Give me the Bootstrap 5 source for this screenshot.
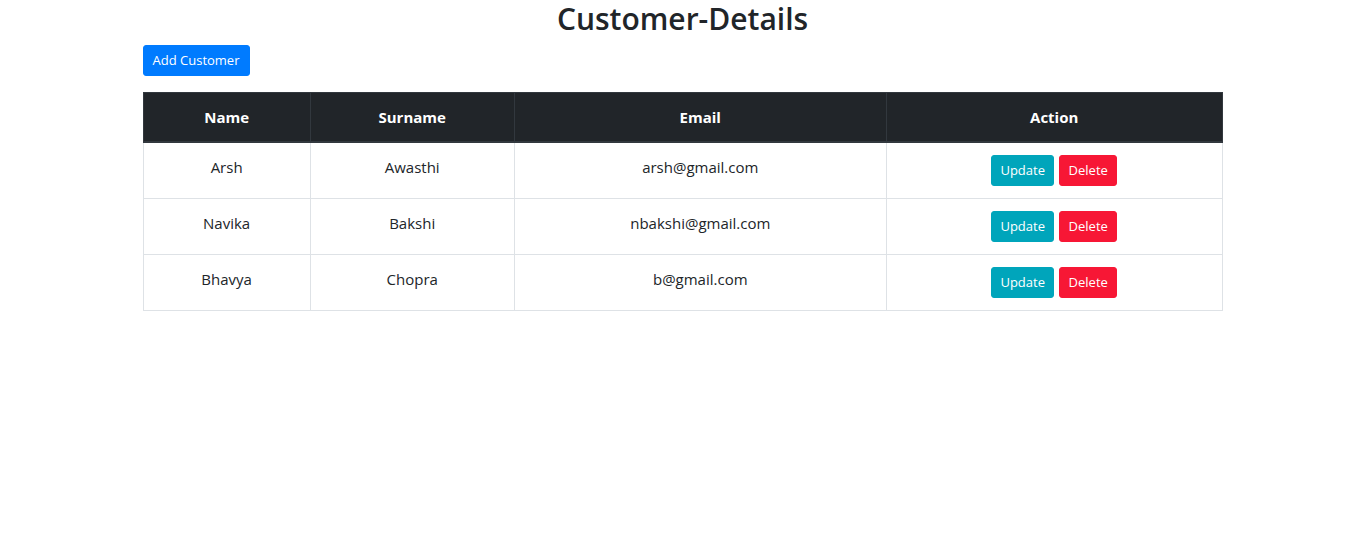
<!DOCTYPE html>
<html lang="en">
<head>
<meta charset="utf-8">
<meta name="viewport" content="width=device-width, initial-scale=1">
<title>Customer-Details</title>
<link href="https://cdn.jsdelivr.net/npm/bootstrap@5.3.0/dist/css/bootstrap.min.css" rel="stylesheet">
<style>
  body { font-family: "Segoe UI", "Open Sans", "Noto Sans", sans-serif; font-size: 15px; line-height: 24px; color: #212529; }
  .page { max-width: 1112px; }
  h1 { font-size: 30px; line-height: 37px; font-weight: 600; }
  .btn-sm { --bs-btn-font-size: 13px; --bs-btn-border-radius: 3px; --bs-btn-color: #fff; --bs-btn-hover-color: #fff; line-height: 21px; padding-inline: 0; }
  .btn-add { --bs-btn-bg: #007bff; --bs-btn-border-color: #007bff; --bs-btn-hover-bg: #0069d9; width: 107px; }
  .btn-update { --bs-btn-bg: #00a5bb; --bs-btn-border-color: #00a5bb; --bs-btn-hover-bg: #138496; width: 63px; }
  .btn-delete { --bs-btn-bg: #f71735; --bs-btn-border-color: #f71735; --bs-btn-hover-bg: #c82333; width: 58px; }
  .customers { table-layout: fixed; --bs-table-border-color: #dee2e6; }
  .customers > :not(caption) > * > * { padding: 12px; border-width: 1px; }
  .customers > thead > tr > th { background: #212529; color: #fff; border-color: #32383e; border-bottom-width: 2px; }
  .col-name { width: 15.5%; }
  .col-surname { width: 18.9%; }
  .col-email { width: 34.5%; }
  .actions { gap: 5px; }
</style>
</head>
<body>
<main class="container page px-3">
  <h1 class="text-center mb-2">Customer-Details</h1>
  <button type="button" class="btn btn-sm btn-add mb-3">Add Customer</button>
  <table class="table customers text-center mb-0">
    <colgroup><col class="col-name"><col class="col-surname"><col class="col-email"><col></colgroup>
    <thead>
      <tr><th scope="col">Name</th><th scope="col">Surname</th><th scope="col">Email</th><th scope="col">Action</th></tr>
    </thead>
    <tbody>
      <tr>
        <td>Arsh</td><td>Awasthi</td><td>arsh@gmail.com</td>
        <td><div class="d-flex justify-content-center actions"><button type="button" class="btn btn-sm btn-update">Update</button><button type="button" class="btn btn-sm btn-delete">Delete</button></div></td>
      </tr>
      <tr>
        <td>Navika</td><td>Bakshi</td><td>nbakshi@gmail.com</td>
        <td><div class="d-flex justify-content-center actions"><button type="button" class="btn btn-sm btn-update">Update</button><button type="button" class="btn btn-sm btn-delete">Delete</button></div></td>
      </tr>
      <tr>
        <td>Bhavya</td><td>Chopra</td><td>b@gmail.com</td>
        <td><div class="d-flex justify-content-center actions"><button type="button" class="btn btn-sm btn-update">Update</button><button type="button" class="btn btn-sm btn-delete">Delete</button></div></td>
      </tr>
    </tbody>
  </table>
</main>
<script src="https://cdn.jsdelivr.net/npm/bootstrap@5.3.0/dist/js/bootstrap.bundle.min.js"></script>
</body>
</html>
